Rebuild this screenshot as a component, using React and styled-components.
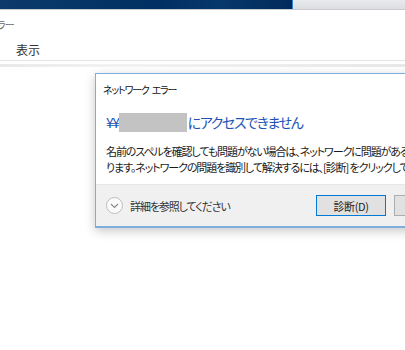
import React from 'react';
import styled, {createGlobalStyle} from 'styled-components';

const Global = createGlobalStyle`
    html, body {
        margin: 0;
        padding: 0;
        background: #fff;
    }
    body {
        font-family: "Noto Sans CJK JP", "Noto Sans", sans-serif;
        font-feature-settings: "palt";
    }
`;

const Screen = styled.div`
    width: 405px;
    height: 350px;
    overflow: hidden;
    background: #fff;
`;

const TopBand = styled.div`
    display: flex;
    height: 9px;
    border-bottom: 1px solid #c9cbce;
`;

const BandDark = styled.div`
    width: 292px;
    background: linear-gradient(100deg, #0b3a6b 0%, #002f63 55%, #07386c 75%, #002a5a 100%);
    border-right: 1px solid #2f7fd0;
`;

const BandLight = styled.div`
    flex: 1;
    background: linear-gradient(#e9eaec, #dcdee1);
`;

const WindowTitle = styled.div`
    height: 28px;
    display: flex;
    align-items: center;
    margin-left: -3px;
    font-size: 10px;
    letter-spacing: -0.8px;
    color: #6a6a6a;
`;

const MenuBar = styled.div`
    height: 22px;
    display: flex;
    align-items: center;
    padding-left: 16px;
    font-size: 12px;
    color: #333;
    border-bottom: 1px solid #e4e4e4;
`;

const ToolStrip = styled.div`
    height: 3px;
    margin-top: 3px;
    background: linear-gradient(90deg, #e9e9e9, #f3f3f3 30%, #e8e8e8);
`;

const Content = styled.div`
    padding: 6px 0 0 95px;
`;

const Dialog = styled.div`
    width: 378px;
    background: #fff;
    border: 1px solid #7eaede;
    border-bottom-width: 2px;
    box-shadow: 0 3px 10px rgba(0, 0, 0, 0.22);
`;

const DialogTitle = styled.div`
    height: 31px;
    display: flex;
    align-items: center;
    gap: 3px;
    padding-left: 7px;
    font-size: 10px;
    letter-spacing: -1.2px;
    color: #111;
`;

const Heading = styled.div`
    display: flex;
    align-items: center;
    height: 22px;
    margin: 6px 0 0 10px;
    font-size: 14px;
    letter-spacing: -1.4px;
    color: #2053b6;
    white-space: nowrap;
`;

const Masked = styled.span`
    display: inline-block;
    width: 68px;
    height: 19px;
    margin-right: 1px;
    background: #c3c3c3;
`;

const Body = styled.div`
    margin: 10px 0 0 10px;
    padding-bottom: 9px;
    font-size: 11px;
    letter-spacing: -1.1px;
    line-height: 16px;
    color: #1a1a1a;
    white-space: nowrap;
`;

const Footer = styled.div`
    height: 41px;
    display: flex;
    align-items: center;
    padding: 0 10px;
    background: #f0f0f0;
    border-top: 1px solid #e6e6e6;
`;

const Circle = styled.span`
    flex: none;
    width: 17px;
    height: 17px;
    border: 1px solid #bdbdbd;
    border-radius: 50%;
    background: #fafafa;
    display: flex;
    align-items: center;
    justify-content: center;
    box-sizing: border-box;
`;

const Details = styled.span`
    margin-left: 7px;
    font-size: 11px;
    letter-spacing: -1.1px;
    color: #333;
    white-space: nowrap;
`;

const Button = styled.button`
    flex: none;
    width: 70px;
    height: 21px;
    margin-left: ${p => (p.$first ? 'auto' : '8px')};
    padding: 0;
    background: #e1e1e1;
    border: 1px solid ${p => (p.$focus ? '#0078d7' : '#adadad')};
    font-family: "Noto Sans CJK JP", "Noto Sans", sans-serif;
    font-feature-settings: "palt";
    font-size: 11px;
    letter-spacing: -0.4px;
    color: #222;
`;

export default function App() {
    return (
        <Screen>
            <Global />
            <TopBand>
                <BandDark />
                <BandLight />
            </TopBand>
            <WindowTitle>ラー</WindowTitle>
            <MenuBar>表示</MenuBar>
            <ToolStrip />
            <Content>
                <Dialog>
                    <DialogTitle>
                        <span>ネットワーク</span>
                        <span>エラー</span>
                    </DialogTitle>
                    <Heading>
                        ¥¥<Masked />にアクセスできません
                    </Heading>
                    <Body>
                        名前のスペルを確認しても問題がない場合は、ネットワークに問題がある可能性があ<br />
                        ります。ネットワークの問題を識別して解決するには、[診断] をクリックしてください。
                    </Body>
                    <Footer>
                        <Circle>
                            <svg width="9" height="6" viewBox="0 0 9 6">
                                <path d="M1 1l3.5 3.5L8 1" fill="none" stroke="#888" strokeWidth="1.1" />
                            </svg>
                        </Circle>
                        <Details>詳細を参照してください</Details>
                        <Button $first $focus>診断(D)</Button>
                        <Button>閉じる</Button>
                    </Footer>
                </Dialog>
            </Content>
        </Screen>
    );
}
